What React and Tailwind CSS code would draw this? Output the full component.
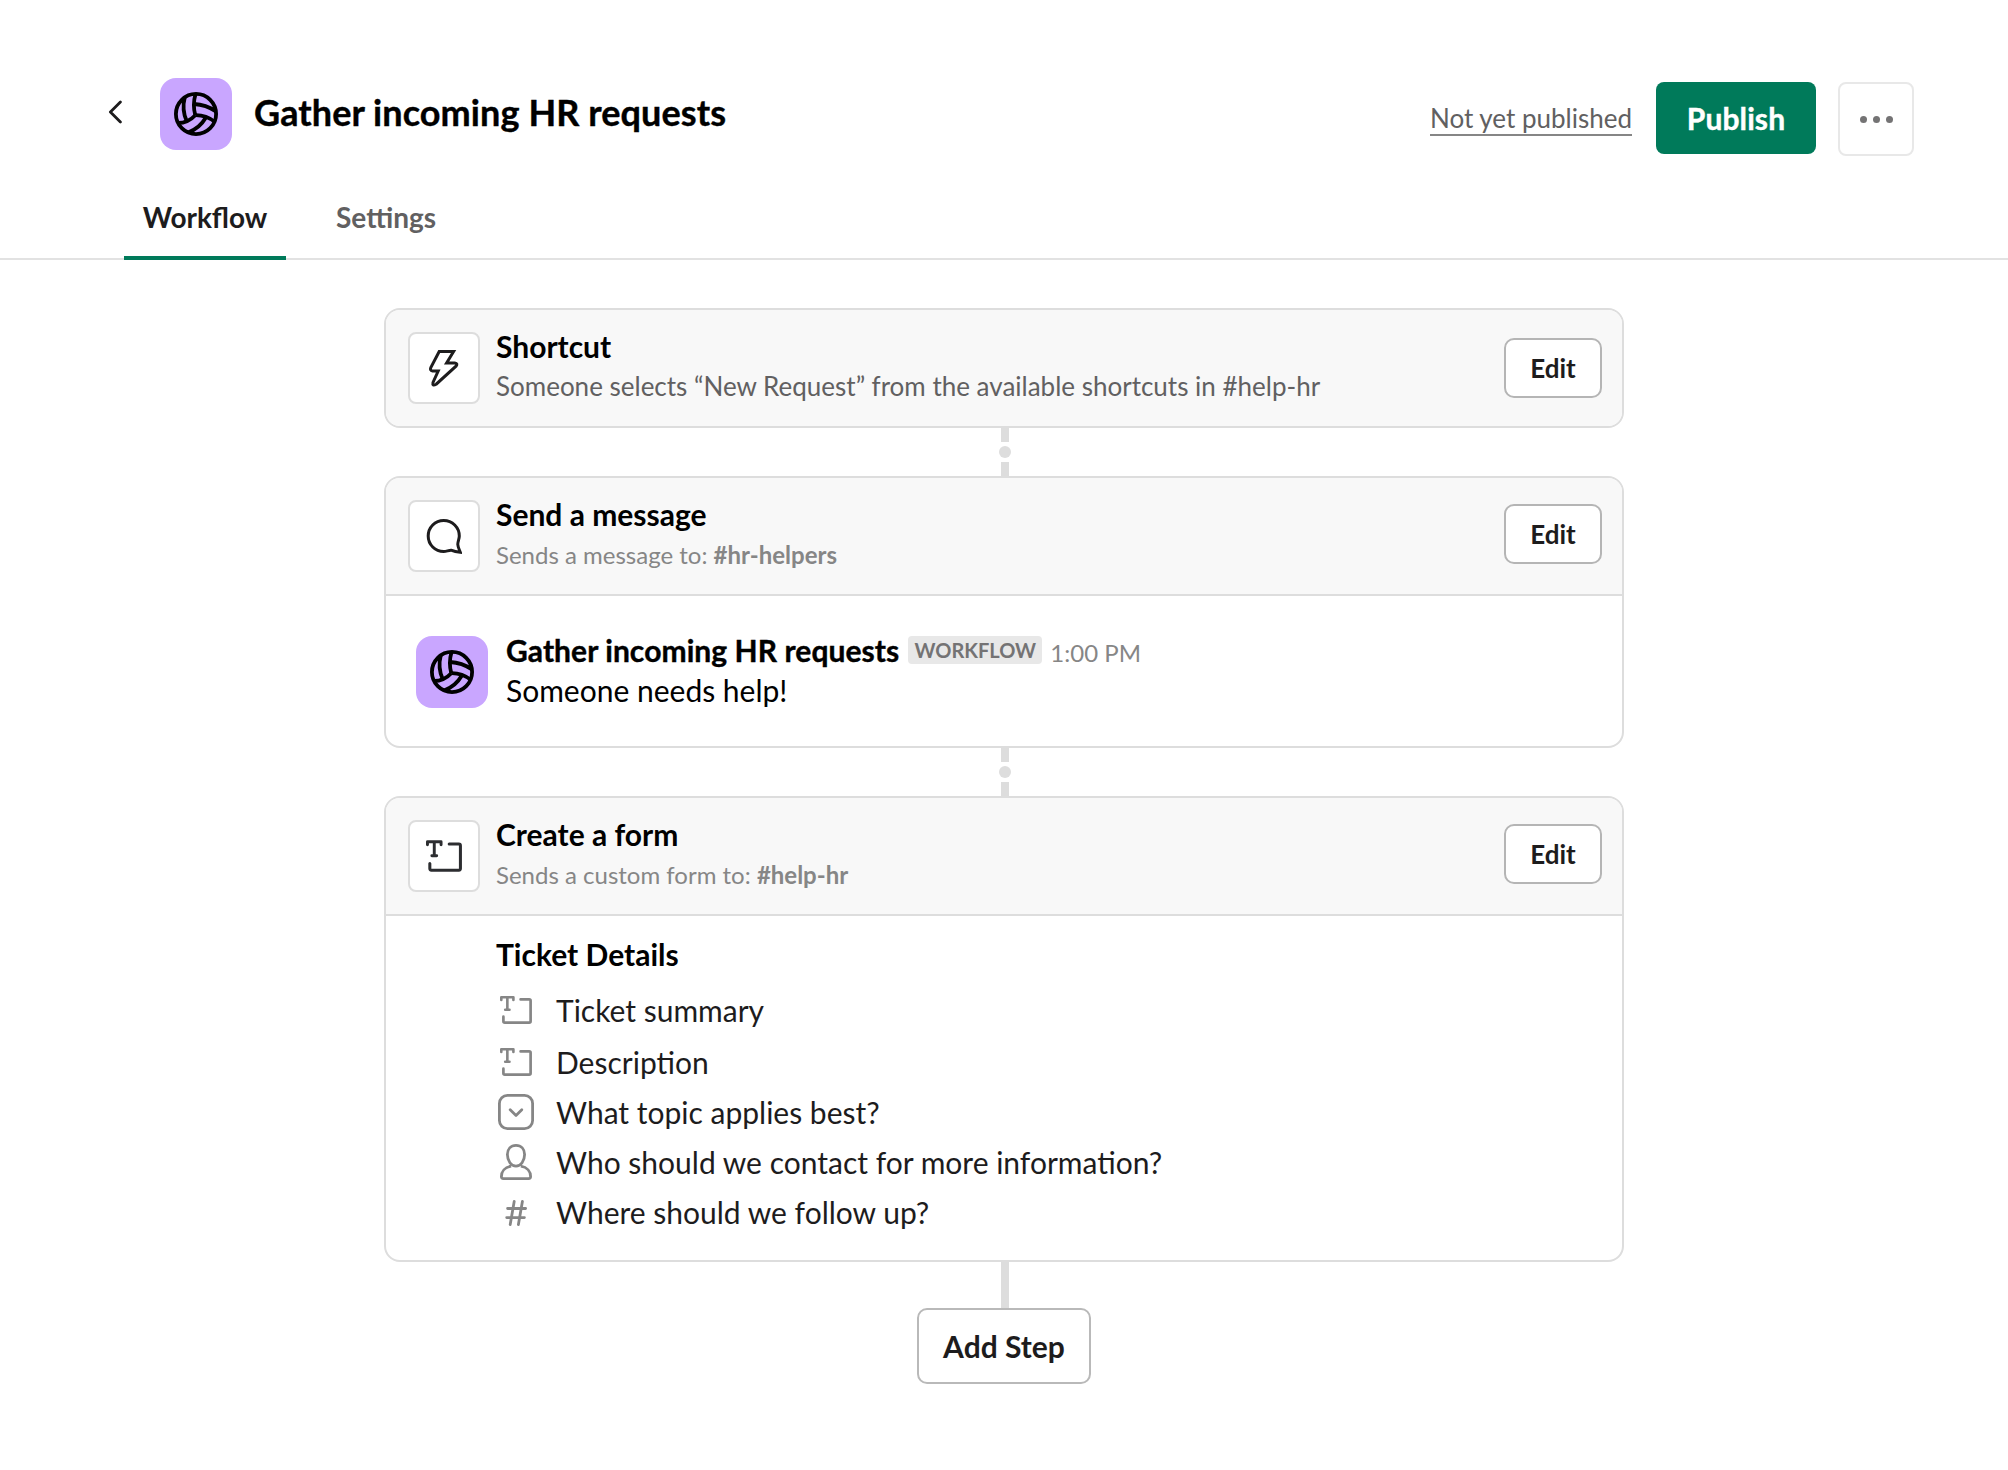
function Volleyball() {
  return (
    <svg className="size-11" viewBox="-22 -22 44 44" fill="none" stroke="#000" strokeWidth="3.8">
      <circle r="20.1" />
      <path d="M-.5-20Q-3.6-9-.7 1.2" />
      <path d="M-.7 1.2Q-8 9-18 9" />
      <path d="M-.7 1.2Q10 1 19 8" />
      <path d="M-11.2-17Q-14.5-4-9.2 7.4" />
      <path d="M-2-10Q10-9.5 20-2.5" />
      <path d="M9.7 3.8Q3.5 14.5-8 18.5" />
    </svg>
  );
}

function AppIcon() {
  return (
    <div className="flex size-[72px] shrink-0 items-center justify-center rounded-[16px] bg-[#c9a6ff]">
      <Volleyball />
    </div>
  );
}

function TextFieldIcon({ className }) {
  return (
    <svg className={className} viewBox="0 0 32 28" fill="none" stroke="currentColor" strokeWidth="2.7" strokeLinecap="round" strokeLinejoin="round">
      <path d="M1.3 4V1.3H13.4V4M7.35 1.5V13.6M5.2 13.8H9.5" strokeWidth="2.6" />
      <path d="M20.6 3.4H29.2Q30.6 3.4 30.6 4.8V25.2Q30.6 26.6 29.2 26.6H4.8Q3.4 26.6 3.4 25.2V20.7" />
    </svg>
  );
}

function LightningIcon() {
  return (
    <svg className="h-10 w-8" viewBox="0 0 32 40" fill="none" stroke="#1d1c1d" strokeWidth="3" strokeLinejoin="miter">
      <path d="M11.2 3.5H25.6L18.6 15H26.8Q30.2 15.4 28 18.2L8.2 36.2Q4 38.6 5 34.4L10.2 23H4.6Q1.6 22.4 2.8 19.6Z" />
    </svg>
  );
}

function BubbleIcon() {
  return (
    <svg className="size-9" viewBox="0 0 36 36" fill="none" stroke="#1d1c1d" strokeWidth="3" strokeLinejoin="miter">
      <path d="M17.7 2.4C26.3 2.4 33.3 9.4 33.3 18C33.3 21 31.6 24 31.8 26.5C32 29.5 33.5 32 34.3 34.3C31 34 27.5 33.2 25 32.2C22.5 32.2 20.5 33.5 17.7 33.5C9.1 33.5 2.2 26.6 2.2 18C2.2 9.4 9.1 2.4 17.7 2.4Z" />
    </svg>
  );
}

function SelectIcon() {
  return (
    <svg className="size-9" viewBox="0 0 36 36" fill="none" stroke="currentColor" strokeWidth="2.8" strokeLinecap="round" strokeLinejoin="round">
      <rect x="1.4" y="1.4" width="33.2" height="33.2" rx="8" />
      <path d="M12.2 15.8L18 21.4L23.8 15.8" />
    </svg>
  );
}

function PersonIcon() {
  return (
    <svg className="size-9" viewBox="0 0 36 36" fill="none" stroke="currentColor" strokeWidth="2.8" strokeLinejoin="round">
      <path d="M18 1.4C23.2 1.4 26.6 5.2 26.6 10.6C26.6 16.8 22.8 22.2 18 22.2C13.2 22.2 9.4 16.8 9.4 10.6C9.4 5.2 12.8 1.4 18 1.4Z" />
      <path d="M13.2 22.2C6.8 23.2 3.4 27.6 3.4 32.6Q3.4 34.6 5.4 34.6H30.6Q32.6 34.6 32.6 32.6C32.6 27.6 29.2 23.2 22.8 22.2" />
    </svg>
  );
}

function HashIcon() {
  return (
    <svg className="size-9" viewBox="0 0 36 36" fill="none" stroke="currentColor" strokeWidth="2.8" strokeLinecap="round">
      <path d="M16.2 7.4L12.2 30.6M24.4 7.4L20.4 30.6M9.6 14.5H27.6M8.7 23.6H26.4" />
    </svg>
  );
}

function EditButton() {
  return (
    <button className="h-[60px] w-[98px] rounded-[10px] border-2 border-[#b5b5b5] bg-white text-[26px] leading-[56px] font-bold text-[#1d1c1d]">
      Edit
    </button>
  );
}

function StepHeader({ icon, title, children, editClass }) {
  return (
    <div className="flex h-[116px] items-start bg-[#f8f8f8] pr-5 pl-[22px]">
      <div className="mt-[22px] flex size-[72px] shrink-0 items-center justify-center rounded-lg border-2 border-[#dddddd] bg-white">
        {icon}
      </div>
      <div className="ml-4 flex-1 pt-4">
        <h2 className="text-[30px] leading-10 font-bold text-black">{title}</h2>
        {children}
      </div>
      <div className={editClass}>
        <EditButton />
      </div>
    </div>
  );
}

function Card({ children }) {
  return <section className="w-[1240px] overflow-hidden rounded-[16px] border-2 border-[#dddddd] bg-white">{children}</section>;
}

function Connector() {
  return (
    <div className="ml-px flex h-12 flex-col items-center justify-between">
      <div className="h-[14px] w-2 bg-[#dddddd]" />
      <div className="size-3 rounded-full bg-[#dddddd]" />
      <div className="h-[14px] w-2 bg-[#dddddd]" />
    </div>
  );
}

function FormField({ icon, label, rowClass }) {
  return (
    <li className={rowClass}>
      <span className="flex w-9 shrink-0 justify-center text-[#868686]">{icon}</span>
      <span className="ml-[22px]">{label}</span>
    </li>
  );
}

export default function App() {
  return (
    <div className="min-h-[1470px] w-[2008px] bg-white font-['Lato',sans-serif] text-[#1d1c1d]">
      <header className="flex h-[260px] flex-col justify-between border-b-2 border-[#e2e2e2]">
        <div className="flex items-start pt-[78px] pr-[94px] pl-[108px]">
          <div className="flex h-[72px] items-center">
            <svg className="mb-1 h-6 w-[14px]" viewBox="0 0 14 24" fill="none" stroke="#1d1c1d" strokeWidth="2.8" strokeLinecap="round" strokeLinejoin="round">
              <path d="M12.4 2L2.4 12L12.4 22" />
            </svg>
          </div>
          <div className="ml-[38px]">
            <AppIcon />
          </div>
          <h1 className="ml-[22px] text-[36px] leading-[68px] font-bold tracking-[0.09px] text-black [-webkit-text-stroke:0.4px_#000]">Gather incoming HR requests</h1>
          <div className="mt-1 ml-auto flex">
            <div className="pt-5">
              <span className="block border-b-2 border-[#868686] text-[26px] leading-8 text-[#616061]">Not yet published</span>
            </div>
            <button className="ml-6 h-[72px] w-40 rounded-lg bg-[#007a5a] text-[30px] font-bold tracking-[0.1px] text-white [-webkit-text-stroke:0.4px_#fff]">Publish</button>
            <button className="ml-[22px] flex h-[74px] w-[76px] items-center justify-center gap-[6px] rounded-lg border-2 border-[#e8e8e8]">
              <span className="size-[7px] rounded-full bg-[#747374]" />
              <span className="size-[7px] rounded-full bg-[#747374]" />
              <span className="size-[7px] rounded-full bg-[#747374]" />
            </button>
          </div>
        </div>
        <nav className="-mb-[2px] ml-[124px] flex text-[28px] leading-[34px] font-bold">
          <a className="h-[60px] w-[162px] border-b-4 border-[#007a5a] text-center">Workflow</a>
          <a className="ml-[50px] text-[#616061]">Settings</a>
        </nav>
      </header>

      <main className="flex flex-col items-center pt-12">
        <Card>
          <StepHeader icon={<LightningIcon />} title="Shortcut" editClass="mt-7">
            <p className="text-[26px] leading-[41px] text-[#616061]">Someone selects “New Request” from the available shortcuts in #help-hr</p>
          </StepHeader>
        </Card>
        <Connector />
        <Card>
          <StepHeader icon={<BubbleIcon />} title="Send a message" editClass="mt-[26px]">
            <p className="text-[24px] leading-[41px] text-[#868686]">
              Sends a message to: <b>#hr-helpers</b>
            </p>
          </StepHeader>
          <div className="flex h-[152px] items-start border-t-2 border-[#dddddd] pt-10 pl-[30px]">
            <AppIcon />
            <div className="ml-[18px] text-black">
              <div className="flex h-[34px] items-start">
                <span className="text-[30px] leading-7 font-bold tracking-[0.07px] [-webkit-text-stroke:0.4px_#000]">Gather incoming HR requests</span>
                <span className="ml-[9px] h-7 w-[134px] rounded-[4px] bg-[#e8e8e8] text-center text-[20px] leading-7 font-bold text-[#747374]">WORKFLOW</span>
                <span className="ml-2 text-[24px] leading-[34px] text-[#868686]">1:00 PM</span>
              </div>
              <p className="text-[30px] leading-10">Someone needs help!</p>
            </div>
          </div>
        </Card>
        <Connector />
        <Card>
          <StepHeader icon={<TextFieldIcon className="h-8 w-9 text-[#2c2d30]" />} title="Create a form" editClass="mt-[26px]">
            <p className="text-[24px] leading-[41px] text-[#868686]">
              Sends a custom form to: <b>#help-hr</b>
            </p>
          </StepHeader>
          <div className="h-[346px] border-t-2 border-[#dddddd] pt-[18px] pl-[110px]">
            <h3 className="text-[30px] leading-10 font-bold text-black">Ticket Details</h3>
            <ul className="pt-[10px] pl-[2px] text-[30px]">
              <FormField icon={<TextFieldIcon className="h-7 w-8" />} label="Ticket summary" rowClass="flex h-[52px] items-center" />
              <FormField icon={<TextFieldIcon className="h-7 w-8" />} label="Description" rowClass="flex h-[52px] items-center" />
              <FormField icon={<SelectIcon />} label="What topic applies best?" rowClass="-mt-px flex h-[50px] items-center" />
              <FormField icon={<PersonIcon />} label="Who should we contact for more information?" rowClass="flex h-[50px] items-center" />
              <FormField icon={<HashIcon />} label="Where should we follow up?" rowClass="flex h-[50px] items-center" />
            </ul>
          </div>
        </Card>
        <div className="ml-px h-[46px] w-2 bg-[#dddddd]" />
        <button className="h-[76px] w-[174px] rounded-[10px] border-2 border-[#b9b9b9] bg-white text-[30px] font-bold">Add Step</button>
      </main>
    </div>
  );
}
